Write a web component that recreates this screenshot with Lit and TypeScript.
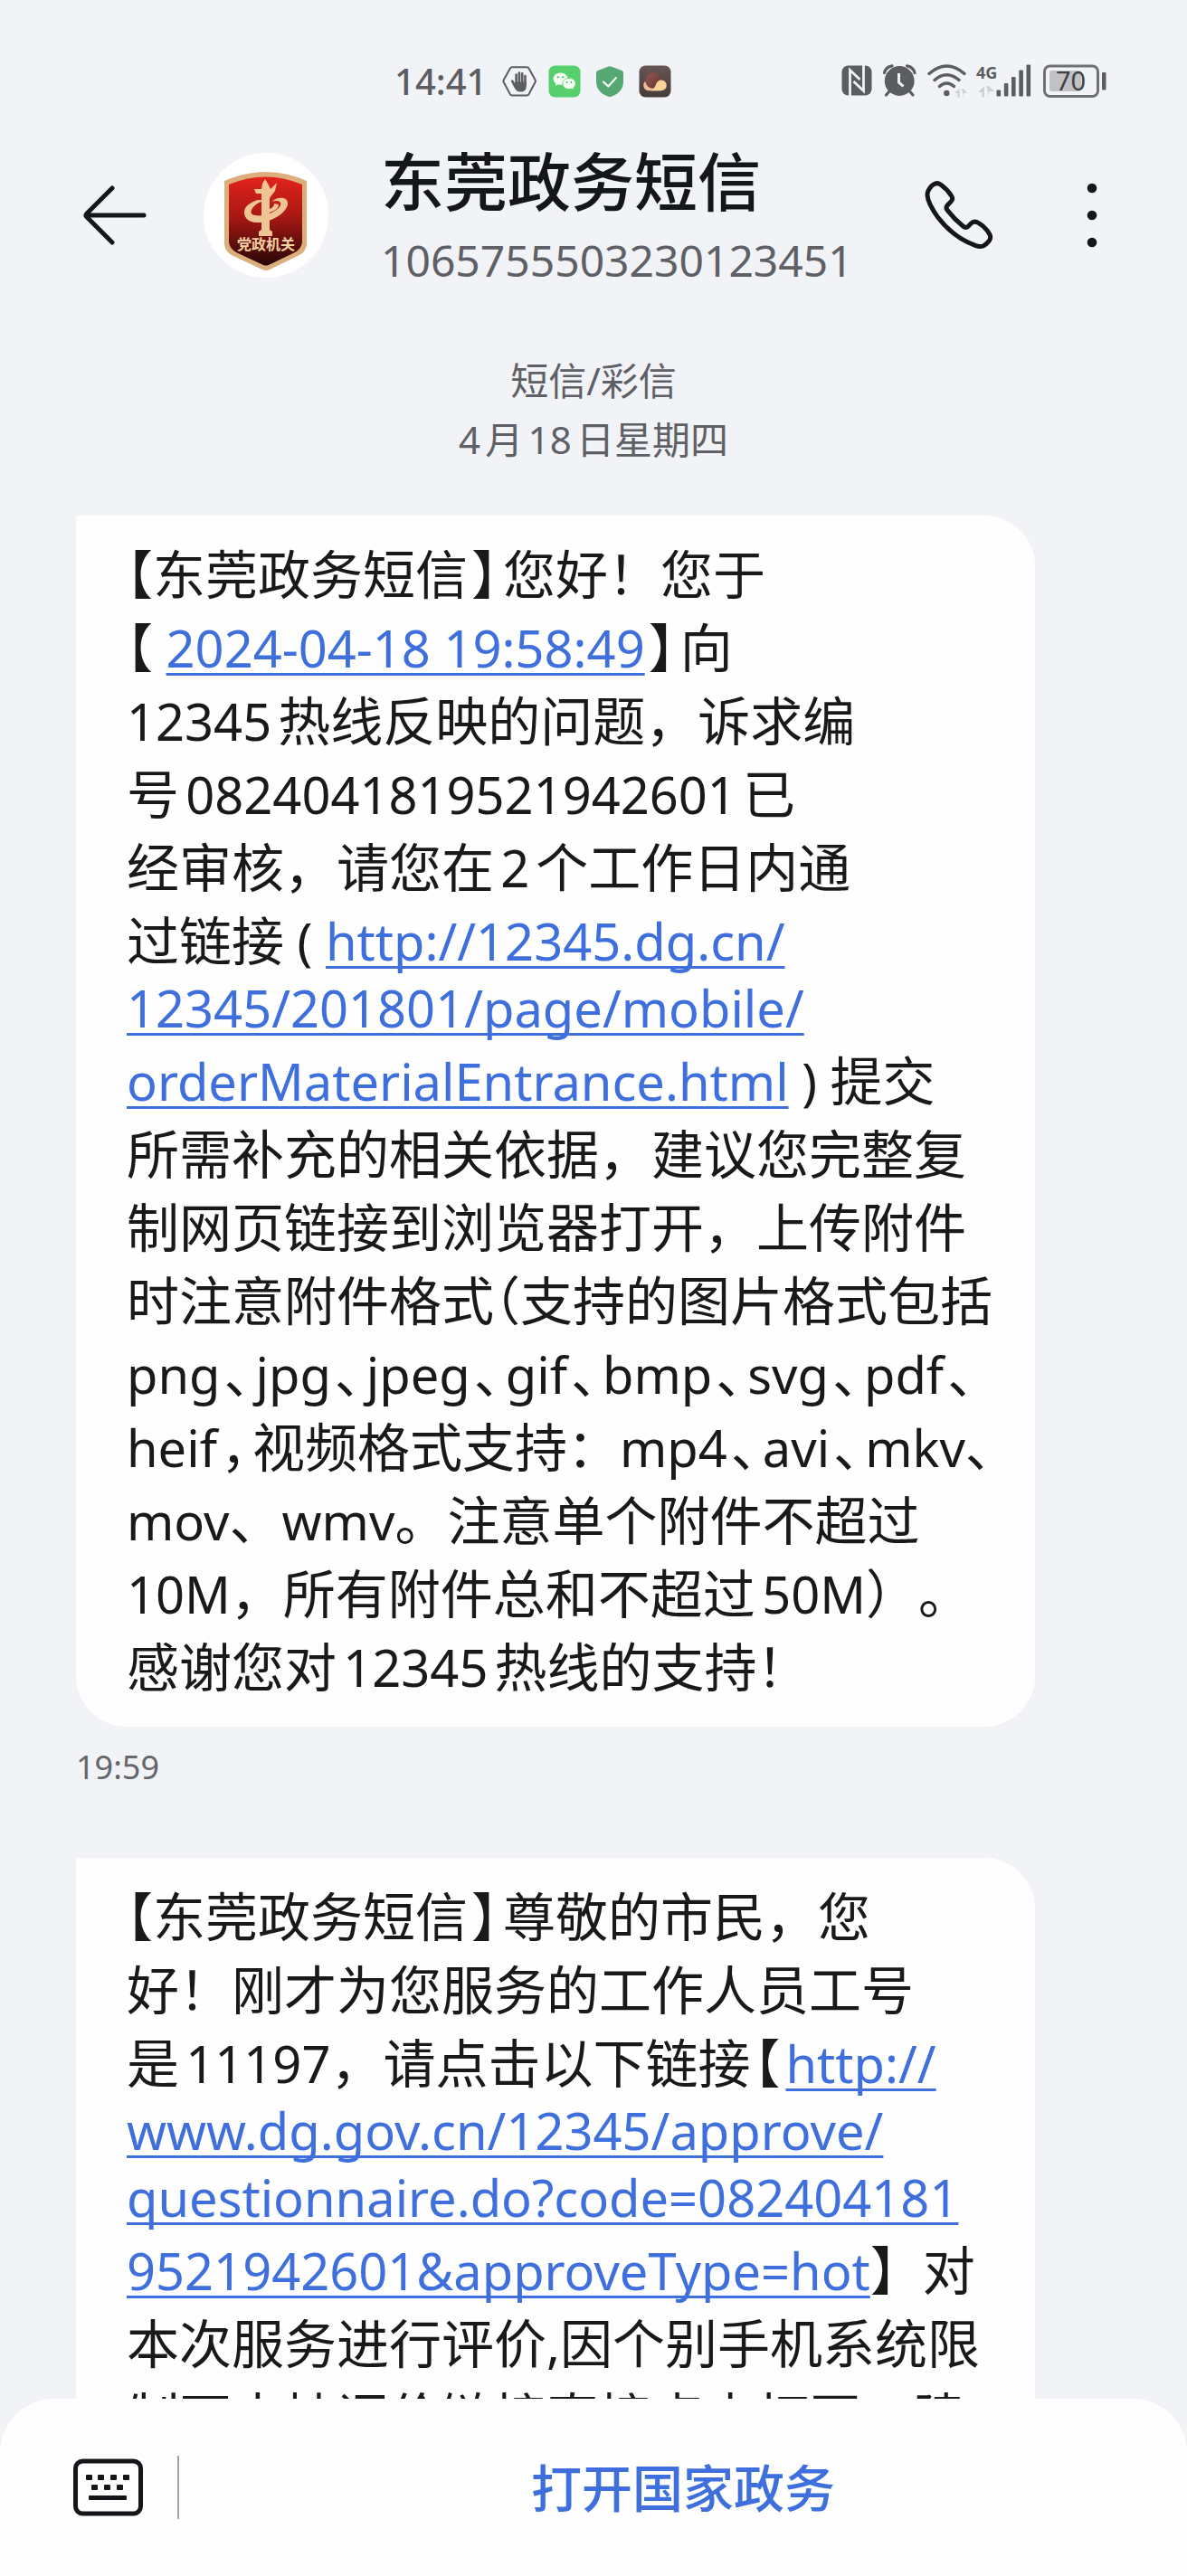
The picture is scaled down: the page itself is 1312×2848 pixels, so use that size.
import { LitElement, html, css, svg } from "lit";
import { customElement, property } from "lit/decorators.js";
import { classMap } from "lit/directives/class-map.js";

type Segment =
  | { kind: "text"; text: string }
  | { kind: "latin"; text: string }
  | { kind: "half"; text: string }
  | { kind: "gap"; text: string }
  | { kind: "link"; text: string; href: string };

interface Line {
  latinOnly?: boolean;
  parts: Segment[];
}

const t = (text: string): Segment => ({ kind: "text", text });
const n = (text: string): Segment => ({ kind: "latin", text });
const h = (text: string): Segment => ({ kind: "half", text });
const g = (text: string): Segment => ({ kind: "gap", text });
const a = (text: string, href: string): Segment => ({ kind: "link", text, href });

const FORM_URL = "http://12345.dg.cn/12345/201801/page/mobile/orderMaterialEntrance.html";
const SURVEY_URL =
  "http://www.dg.gov.cn/12345/approve/questionnaire.do?code=0824041819521942601&approveType=hot";
const DATE_URL = "#2024-04-18";

const FIRST: Line[] = [
  { parts: [h("【"), t("东莞政务短信"), g("】"), t("您好！您于")] },
  { parts: [h("【"), n(" "), a("2024-04-18 19:58:49", DATE_URL), g("】"), t("向")] },
  { parts: [n("12345"), t("热线反映的问题，诉求编")] },
  { parts: [t("号"), n("0824041819521942601"), t("已")] },
  { parts: [t("经审核，请您在"), n("2"), t("个工作日内通")] },
  { parts: [t("过链接"), n(" ( "), a("http://12345.dg.cn/", FORM_URL)] },
  { latinOnly: true, parts: [a("12345/201801/page/mobile/", FORM_URL)] },
  { parts: [a("orderMaterialEntrance.html", FORM_URL), n(" ) "), t("提交")] },
  { parts: [t("所需补充的相关依据，建议您完整复")] },
  { parts: [t("制网页链接到浏览器打开，上传附件")] },
  { parts: [t("时注意附件格式"), h("（"), t("支持的图片格式包括")] },
  {
    parts: [
      n("png"), g("、"), n("jpg"), g("、"), n("jpeg"), g("、"), n("gif"), g("、"),
      n("bmp"), g("、"), n("svg"), g("、"), n("pdf"), g("、"),
    ],
  },
  {
    parts: [
      n("heif"), g("，"), t("视频格式支持："), n("mp4"), g("、"), n("avi"), g("、"),
      n("mkv"), h("、"),
    ],
  },
  { parts: [n("mov"), t("、"), n("wmv"), t("。注意单个附件不超过")] },
  { parts: [n("10M"), t("，所有附件总和不超过"), n("50M"), t("）。")] },
  { parts: [t("感谢您对"), n("12345"), t("热线的支持！")] },
];

const SECOND: Line[] = [
  { parts: [h("【"), t("东莞政务短信"), g("】"), t("尊敬的市民，您")] },
  { parts: [t("好！刚才为您服务的工作人员工号")] },
  { parts: [t("是"), n("11197"), t("，请点击以下链接"), g("【"), a("http://", SURVEY_URL)] },
  { latinOnly: true, parts: [a("www.dg.gov.cn/12345/approve/", SURVEY_URL)] },
  { latinOnly: true, parts: [a("questionnaire.do?code=082404181", SURVEY_URL)] },
  { parts: [a("9521942601&approveType=hot", SURVEY_URL), t("】对")] },
  { parts: [t("本次服务进行评价"), n(","), t("因个别手机系统限")] },
  { parts: [t("制不支持评价链接直接点击打开，建")] },
];

@customElement("message-bubble")
export class MessageBubble extends LitElement {
  @property({ attribute: false }) lines: Line[] = [];

  static styles = css`
    :host {
      display: block;
      box-sizing: border-box;
      padding: 24px 56px 26px;
      border-radius: 4px 56px 56px 56px;
      background: #fefefe;
      color: #191919;
      font-size: 58px;
      line-height: 81px;
      text-autospace: normal;
      text-spacing-trim: space-all;
    }
    .line {
      display: block;
      white-space: pre;
    }
    .line.latin-only {
      line-height: 67px;
      padding-bottom: 7px;
    }
    .latin,
    .link {
      font-size: 56px;
      line-height: 1;
    }
    .half,
    .gap {
      font-feature-settings: "halt";
      line-height: 1;
    }
    .gap {
      margin: 0 6px 0 4px;
    }
    .link {
      color: #3f6fdd;
      text-decoration: underline;
      text-decoration-thickness: 3px;
      text-underline-offset: 6px;
      text-decoration-skip-ink: none;
    }
  `;

  private segment(s: Segment) {
    return s.kind === "link"
      ? html`<a class="link" href=${s.href}>${s.text}</a>`
      : html`<span class=${s.kind}>${s.text}</span>`;
  }

  render() {
    return this.lines.map(
      (l) =>
        html`<span class=${classMap({ line: true, "latin-only": !!l.latinOnly })}
          >${l.parts.map((p) => this.segment(p))}</span
        >`
    );
  }
}

const handIcon = svg`
  <path d="M11 3.2h16.4q1.4 0 2.1 1.2l7 12.8q.8 1.4 0 2.8l-7 13.2q-.7 1.2-2.1 1.2H11q-1.4 0-2.1-1.2L1.8 20q-.8-1.4 0-2.8L8.900 4.400Q9.600 3.200 11 3.200Z" fill="none" stroke="#5c5d62" stroke-width="2"/>
  <g stroke="#5c5d62" stroke-linecap="round" stroke-width="2.600" fill="none">
    <path d="M15.600 11.500V22M18.900 9.600V22M22.200 10.200V22M25.500 13V23M11.200 18.600l3.400 6"/>
  </g>
  <path d="M14.300 19.500H26.800V24q0 6.600-6.600 6.600-4 0-6-3.600l-2.800-5.200 2.900 1z" fill="#5c5d62"/>`;

const chatIcon = svg`
  <rect x="1.500" y="1.500" width="35" height="35" rx="7" fill="#55d06c"/>
  <path d="M14.500 9.500c4.600 0 8 2.900 8 6.600s-3.400 6.700-8 6.700c-1 0-1.900-.1-2.800-.4l-3 1.700.8-2.700c-1.900-1.300-3-3.200-3-5.300 0-3.700 3.500-6.600 8-6.600Z" fill="#f3fff3"/>
  <path d="M24 15.300c4.100 0 7.300 2.700 7.300 6.100 0 2-1 3.600-2.600 4.700l.6 2.400-2.700-1.400c-.8.300-1.700.4-2.600.4-4.100 0-7.300-2.700-7.300-6.100s3.200-6.100 7.300-6.100Z" fill="#f3fff3" stroke="#55d06c" stroke-width=".8"/>
  <g fill="#46ab5a"><circle cx="11.800" cy="14.200" r="1"/><circle cx="17.300" cy="14.200" r="1"/><circle cx="21.600" cy="20" r=".9"/><circle cx="26.300" cy="20" r=".9"/></g>`;

const shieldIcon = svg`
  <path d="M17.600 2.500q1.400-.7 2.800 0L32.300 7Q34 7.700 34 9.500V19q0 12-13.500 16.800-1.500.5-3 0Q4 31 4 19V9.500Q4 7.700 5.700 7Z" fill="#56a873"/>
  <path d="M12 19.500l5.300 5L26 15" fill="none" stroke="#f4fff6" stroke-width="2.200" stroke-linecap="round" stroke-linejoin="round"/>`;

const cloudIcon = svg`
  <defs>
    <linearGradient id="dark" x1="0" y1="0" x2="0" y2="1"><stop offset="0" stop-color="#665554"/><stop offset="1" stop-color="#443c38"/></linearGradient>
    <linearGradient id="plum" x1="0" y1="0" x2="1" y2="1"><stop offset="0" stop-color="#8f5853"/><stop offset="1" stop-color="#6a3431"/></linearGradient>
  </defs>
  <rect x="1.500" y="1.500" width="35" height="35" rx="7" fill="url(#dark)"/>
  <path d="M8 19a6 6 0 0 0 3.500 10.200h14l-6-8z" fill="#f0bd92"/>
  <circle cx="17" cy="18" r="8.800" fill="url(#plum)"/>
  <path d="M14 29.200q4.200-1.500 5.600-6 1.900-5.800 6.300-5.800a5.900 5.900 0 0 1 0 11.800Z" fill="#f8d49c"/>`;

@customElement("app-root")
export class AppRoot extends LitElement {
  static styles = css`
    :host {
      display: flex;
      flex-direction: column;
      height: 100vh;
      overflow: hidden;
      background: #f1f3f7;
      color: #15161a;
      font-family: "Noto Sans", "Noto Sans CJK SC", sans-serif;
    }
    svg {
      display: block;
      flex: none;
    }
    button {
      display: flex;
      align-items: center;
      justify-content: center;
      padding: 0;
      border: 0;
      background: none;
      color: inherit;
      font: inherit;
    }
    .status {
      display: flex;
      flex: none;
      justify-content: space-between;
      align-items: center;
      height: 60px;
      padding: 60px 88px 0 436px;
      color: #5c5d62;
    }
    .group {
      display: flex;
      align-items: center;
      gap: 12px;
    }
    .clock {
      margin-right: 5px;
      font-size: 40px;
      line-height: 60px;
      font-weight: 500;
    }
    .header {
      display: flex;
      flex: none;
      align-items: center;
      height: 160px;
      margin-top: 38px;
      padding: 0 88px;
    }
    .back {
      width: 78px;
      height: 78px;
    }
    .avatar {
      width: 138px;
      height: 138px;
      margin: 0 58px 0 59px;
    }
    .contact {
      flex: 1;
      min-width: 0;
      padding-top: 10px;
    }
    .name {
      margin: 0;
      font-size: 70px;
      line-height: 90px;
      font-weight: 500;
    }
    .number {
      margin: 0;
      color: #5f6065;
      font-size: 48px;
      line-height: 84px;
    }
    .call {
      width: 80px;
      height: 80px;
    }
    .more {
      width: 34px;
      height: 80px;
      margin-left: 90px;
    }
    .thread {
      flex: 1 1 0;
      min-height: 0;
      overflow: hidden;
      padding: 70px 168px 0 84px;
    }
    .meta {
      margin: 0 -84px 52px 0;
      color: #5f6065;
      font-size: 42px;
      line-height: 65px;
      text-align: center;
      text-autospace: normal;
    }
    .meta p {
      margin: 0;
    }
    .time {
      display: block;
      margin: 20px 0 75px;
      color: #65666b;
      font-size: 36px;
      line-height: 50px;
    }
    .footer {
      display: flex;
      flex: none;
      align-items: center;
      height: 196px;
      padding-left: 80px;
      border-radius: 60px 60px 0 0;
      background: #fefefe;
    }
    .keyboard {
      width: 78px;
      height: 78px;
    }
    .divider {
      width: 2px;
      height: 70px;
      margin-left: 38px;
      background: #a0a1a4;
    }
    .service {
      flex: 1;
      height: 120px;
      padding-bottom: 6px;
      color: #3f6fdd;
      font-size: 56px;
      font-weight: 500;
    }
  `;

  private statusBar() {
    return html`<div class="status">
      <div class="group">
        <span class="clock">14:41</span>
        <svg width="38" height="38" viewBox="0 0 38 38" aria-hidden="true">${handIcon}</svg>
        <svg width="38" height="38" viewBox="0 0 38 38" aria-hidden="true">${chatIcon}</svg>
        <svg width="38" height="38" viewBox="0 0 38 38" aria-hidden="true">${shieldIcon}</svg>
        <svg width="38" height="38" viewBox="0 0 38 38" aria-hidden="true">${cloudIcon}</svg>
      </div>
      <div class="group">
        <svg width="34" height="38" viewBox="0 0 34 38" aria-hidden="true">
          <rect x="0.5" y="1.500" width="33" height="33" rx="7" fill="#5c5d62" />
          <path d="M9.500 35V6.500L20.500 17M24.500 1V29.500L13.500 19" fill="none" stroke="#f1f3f7" stroke-width="2.800" />
        </svg>
        <svg width="37" height="38" viewBox="0 0 37 38" aria-hidden="true">
          <path d="M1.500 9.500Q3 3 10 1.800M35 9.500Q33.500 3 26.500 1.800M7 30L3.500 34M29.500 30L33 34" stroke="#5c5d62" stroke-width="3.200" stroke-linecap="round" fill="none" />
          <circle cx="18.200" cy="18.500" r="16.400" fill="#5c5d62" />
          <path d="M17.500 10V20L22.500 24.500" fill="none" stroke="#f1f3f7" stroke-width="3" />
        </svg>
        <svg width="44" height="38" viewBox="0 0 44 38" aria-hidden="true">
          <g fill="none" stroke="#5c5d62" stroke-width="3.400" stroke-linecap="round">
            <path d="M2 10.500Q21.300-6.500 41 10.500M8 17.500Q21.300 6 35 17.500M13.500 24.500Q21.300 17.500 29.500 24.500" />
          </g>
          <circle cx="21.300" cy="32" r="3.200" fill="#5c5d62" />
          <path d="M30 32L35.500 27V36.500H33.500V32ZM38 27H40L44 32H40V36Z" fill="#cfd0d4" />
        </svg>
        <svg width="60" height="38" viewBox="0 0 60 38" overflow="visible" aria-hidden="true">
          <text x="-2" y="16" font-size="18" font-weight="700" fill="#5c5d62">4G</text>
          <g fill="#5c5d62">
            <rect x="20.500" y="28.500" width="4.600" height="7" rx="1" />
            <rect x="28.800" y="21" width="4.600" height="14.500" rx="1" />
            <rect x="37" y="14" width="4.600" height="21.500" rx="1" />
            <rect x="45.300" y="6.500" width="4.600" height="29" rx="1" />
            <rect x="53.500" y="0.500" width="4.600" height="35" rx="1" />
          </g>
          <path d="M0 31L7 24V36.500H4.500V31ZM9.500 24H12L18 30H12V36Z" fill="#cfd0d4" />
        </svg>
        <svg width="71" height="38" viewBox="0 0 71 38" aria-hidden="true">
          <rect x="1.500" y="2" width="59" height="33.500" rx="6" fill="none" stroke="#6f7075" stroke-width="3" />
          <rect x="7" y="7" width="35" height="23" rx="2" fill="#c1c2c5" />
          <rect x="65" y="9" width="4.500" height="19.500" rx="1" fill="#5c5d62" />
          <text x="30.500" y="29" font-size="29" text-anchor="middle" fill="#3f4044">70</text>
        </svg>
      </div>
    </div>`;
  }

  private emblem() {
    return html`<svg class="avatar" viewBox="0 0 138 138" role="img" aria-label="党政机关">
      <defs>
        <linearGradient id="red" x1="0" y1="0" x2="0" y2="1">
          <stop offset="0" stop-color="#e2231b" />
          <stop offset="0.450" stop-color="#a81814" />
          <stop offset="1" stop-color="#260606" />
        </linearGradient>
      </defs>
      <circle cx="69" cy="69" r="69" fill="#fff" />
      <path d="M23 31Q69 11 114 31V101Q113 110 104 114L73 129Q69 131 65 129L33 114Q24 110 23 101Z" fill="#dcae7c" />
      <path d="M28 35Q69 18 109 35V99Q108 106 101 110L72 124Q69 125 66 124L36 110Q29 106 28 99Z" fill="url(#red)" />
      <g fill="#f0c596">
        <path d="M64 50h9v35l3 2v5H61v-5l3-2zM64 50v-5h-6l-2-5h8l1-6 3-5 3 5 3 6 7-7-2 9-6 8z" />
        <path d="M50 57C42 62 43 76 58 77 72 78 91 68 93 57 94 48 82 48 75 54 80 52 87 53 85 58 82 65 66 71 57 69 50 68 52 62 58 57 68 51 72 53 62 52 58 52 54 54 50 57Z" />
        <path d="M73 66Q83 63 83 57L78 56Q78 60 73 62Z" />
      </g>
      <text x="69" y="107" font-size="16" font-weight="700" text-anchor="middle" fill="#f4cfa2">党政机关</text>
    </svg>`;
  }

  render() {
    return html`
      ${this.statusBar()}
      <header class="header">
        <button class="back" aria-label="返回">
          <svg width="78" height="78" viewBox="0 0 78 78">
            <path d="M36 9L8 37Q6 39 8 41L36 69M8 39H71" fill="none" stroke="#15161a" stroke-width="5" stroke-linecap="round" stroke-linejoin="round" />
          </svg>
        </button>
        ${this.emblem()}
        <div class="contact">
          <h1 class="name">东莞政务短信</h1>
          <p class="number">1065755503230123451</p>
        </div>
        <button class="call" aria-label="拨打电话">
          <svg width="80" height="80" viewBox="180 147 240 240">
            <path d="M195 200Q194 186 210 169Q225 154 240 166Q262 182 275 203Q282 213 273 222L262 233Q254 241 262 251Q286 282 314 304Q323 311 332 302L340 294Q350 284 364 292Q388 306 401 329Q408 341 399 353Q390 364 380 369Q369 373 356 368Q280 340 230 274Q196 226 195 200Z" fill="none" stroke="#15161a" stroke-width="15" stroke-linejoin="round" />
          </svg>
        </button>
        <button class="more" aria-label="更多">
          <svg width="34" height="80" viewBox="0 0 34 80">
            <g fill="#15161a"><circle cx="17" cy="10" r="5.300" /><circle cx="17" cy="40" r="5.300" /><circle cx="17" cy="70" r="5.300" /></g>
          </svg>
        </button>
      </header>
      <main class="thread">
        <div class="meta">
          <p>短信/彩信</p>
          <p>4月18日星期四</p>
        </div>
        <message-bubble .lines=${FIRST}></message-bubble>
        <time class="time">19:59</time>
        <message-bubble .lines=${SECOND}></message-bubble>
      </main>
      <footer class="footer">
        <button class="keyboard" aria-label="键盘">
          <svg width="78" height="64" viewBox="0 0 78 64">
            <rect x="3.500" y="3" width="72" height="58" rx="8" fill="none" stroke="#15161a" stroke-width="5" />
            <g fill="#15161a">
              <rect x="15" y="18" width="7" height="6" rx="1" /><rect x="28" y="18" width="7" height="6" rx="1" />
              <rect x="42" y="18" width="7" height="6" rx="1" /><rect x="56" y="18" width="7" height="6" rx="1" />
              <rect x="21" y="29" width="7" height="6" rx="1" /><rect x="35" y="29" width="7" height="6" rx="1" />
              <rect x="49" y="29" width="7" height="6" rx="1" /><rect x="18" y="41" width="42" height="5" rx="1" />
            </g>
          </svg>
        </button>
        <span class="divider"></span>
        <button class="service">打开国家政务</button>
      </footer>
    `;
  }
}
